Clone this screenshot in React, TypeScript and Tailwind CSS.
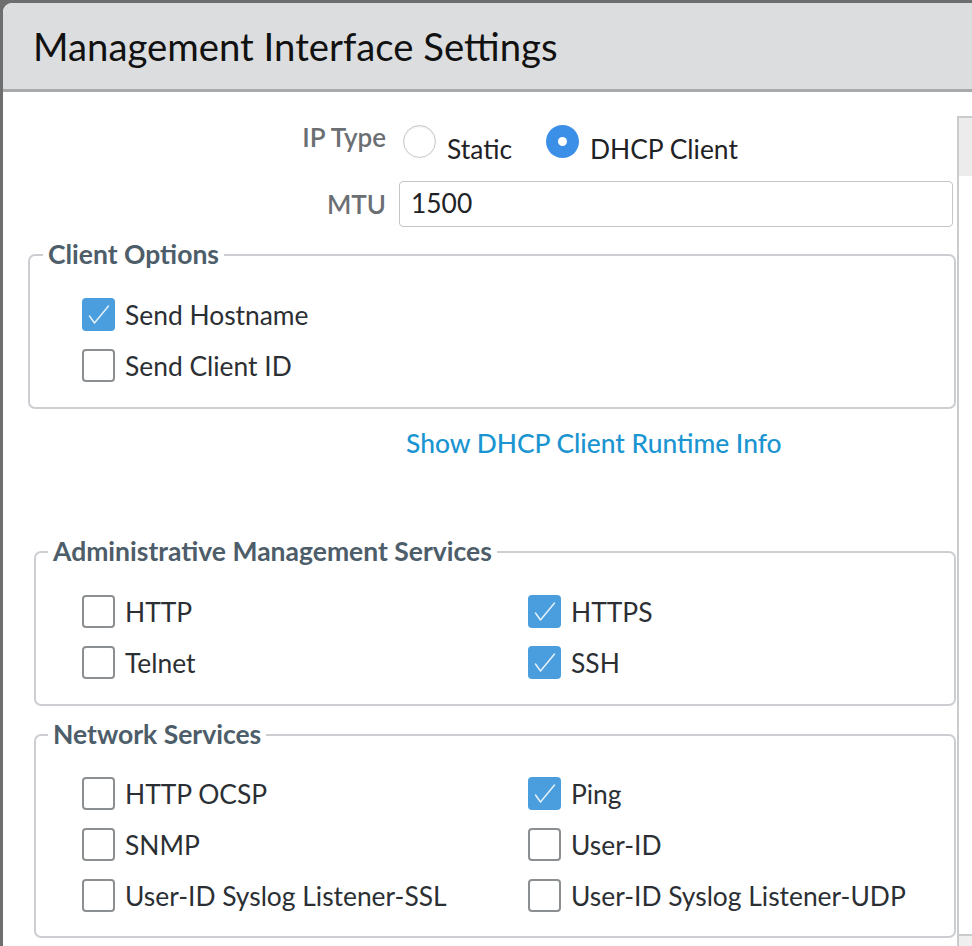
import React from "react";

const FONT = { fontFamily: "Lato, 'Noto Sans', sans-serif" };

function Check({ checked }: { checked?: boolean }) {
  return checked ? (
    <span className="flex h-[33px] w-[33px] shrink-0 items-center justify-center rounded-[4px] bg-[#4a9edd]">
      <svg width="33" height="33" viewBox="0 0 33 33">
        <path d="M7.5 18 L12.5 25 L26.5 8" fill="none" stroke="#ffffff" strokeOpacity="0.85" strokeWidth="1.5" strokeLinecap="round" strokeLinejoin="round" />
      </svg>
    </span>
  ) : (
    <span className="h-[33px] w-[33px] shrink-0 rounded-[4px] border-[2.5px] border-[#8c8f92] bg-white" />
  );
}

function Item({ label, checked }: { label: string; checked?: boolean }) {
  return (
    <div className="flex h-[33px] items-center gap-[10px]">
      <Check checked={checked} />
      <span className="text-[26.4px] leading-[32px] text-[#2b2f33]">{label}</span>
    </div>
  );
}

function Legend({ children, ml }: { children: React.ReactNode; ml: string }) {
  return (
    <legend className={`${ml} px-[5px] pb-[2px] text-[26.5px] font-bold leading-[26px] text-[#4d5d69]`}>{children}</legend>
  );
}

export default function App() {
  return (
    <div style={FONT} className="h-[946px] w-[972px] overflow-hidden bg-[#6e6e6e] pl-[3px] pt-[3px]">
      <div className="flex h-full flex-col overflow-hidden rounded-tl-[9px] bg-white">
        <div className="flex h-[89px] shrink-0 items-center border-b-[3px] border-[#a8aaac] bg-[#dcdddf] pl-[30px]">
          <h1 className="text-[38.3px] leading-none text-[#111111]">Management Interface Settings</h1>
        </div>
        <div className="flex flex-1">
          <div className="flex w-[954px] shrink-0 flex-col">
            <div className="mt-[33px] flex h-[56px] items-start">
              <div className="-mt-[2px] w-[383px] text-right text-[26px] font-semibold leading-[28px] text-[#6b6f73]">IP Type</div>
              <span className="ml-[17px] h-[33px] w-[33px] shrink-0 rounded-full border border-[#c6c6c6] bg-white shadow-[inset_0_1px_2px_rgba(0,0,0,0.08)]" />
              <span className="ml-[11px] mt-[8px] text-[26.4px] leading-[32px] text-[#1f2225]">Static</span>
              <span className="ml-[34px] flex h-[33px] w-[33px] shrink-0 items-center justify-center rounded-full bg-[#3b8fe7]">
                <span className="h-[9px] w-[9px] rounded-full bg-white" />
              </span>
              <span className="ml-[11px] mt-[8px] text-[26.4px] leading-[32px] text-[#1f2225]">DHCP Client</span>
            </div>
            <div className="flex h-[46px] items-center">
              <div className="w-[383px] text-right text-[26px] font-semibold leading-[28px] text-[#6b6f73]">MTU</div>
              <div className="ml-[13px] flex h-[46px] w-[554px] items-center rounded-[4px] border-[1.5px] border-[#c3c5c7] pl-[11px] text-[26.4px] text-[#1f2225]">
                1500
              </div>
            </div>

            <fieldset className="ml-[25px] mr-[1px] mt-[14px] rounded-[7px] border-2 border-[#ccced1] p-0">
              <Legend ml="ml-[13px]">Client Options</Legend>
              <div className="flex flex-col gap-[18px] pb-[25px] pl-[52px] pt-[29px]">
                <Item label="Send Hostname" checked />
                <Item label="Send Client ID" />
              </div>
            </fieldset>

            <div className="ml-[403px] mt-[18px] text-[26.4px] font-medium leading-[32px] text-[#1a95d1]">
              Show DHCP Client Runtime Info
            </div>

            <fieldset className="ml-[31px] mr-[1px] mt-[79px] rounded-[7px] border-2 border-[#ccced1] p-0">
              <Legend ml="ml-[12px]">Administrative Management Services</Legend>
              <div className="grid grid-cols-[446px_1fr] gap-y-[18px] pb-[25px] pl-[46px] pt-[29px]">
                <Item label="HTTP" />
                <Item label="HTTPS" checked />
                <Item label="Telnet" />
                <Item label="SSH" checked />
              </div>
            </fieldset>

            <fieldset className="ml-[31px] mr-[1px] mt-[15px] rounded-[7px] border-2 border-[#ccced1] p-0">
              <Legend ml="ml-[12px]">Network Services</Legend>
              <div className="grid grid-cols-[446px_1fr] gap-y-[18px] pb-[24px] pl-[46px] pt-[28px]">
                <Item label="HTTP OCSP" />
                <Item label="Ping" checked />
                <Item label="SNMP" />
                <Item label="User-ID" />
                <Item label="User-ID Syslog Listener-SSL" />
                <Item label="User-ID Syslog Listener-UDP" />
              </div>
            </fieldset>
          </div>
          <div className="mt-[24px] flex flex-1 flex-col border-l-2 border-t-2 border-[#c9cbcd]">
            <div className="h-[58px] bg-[#ececec]" />
            <div className="flex-1 bg-white" />
            <div className="h-[12px] border-t-2 border-[#c9cbcd] bg-[#efefef]" />
          </div>
        </div>
      </div>
    </div>
  );
}
